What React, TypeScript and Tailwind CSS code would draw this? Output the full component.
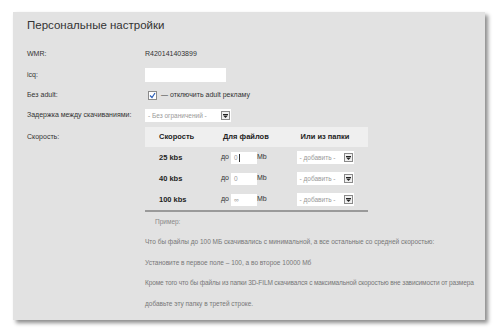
import React from 'react';

const font = { fontFamily: '"Liberation Sans", Arial, sans-serif' };

function ArrowBox() {
  return (
    <span className="ml-auto mr-[1px] flex h-[9px] w-[9px] items-center justify-center border border-[#8a8a8a] bg-[#f0f0f0]">
      <svg width="5" height="4" viewBox="0 0 5 4">
        <rect x="0" y="0" width="5" height="1" fill="#222" />
        <path d="M0 1.5 H5 L2.5 4 Z" fill="#222" />
      </svg>
    </span>
  );
}

function Select({ text, width }: { text: string; width: string }) {
  return (
    <div className={`flex h-[13px] items-center whitespace-nowrap bg-white pl-[3px] text-[6.5px] text-[#999] ${width}`}>
      <span>{text}</span>
      <ArrowBox />
    </div>
  );
}

function SpeedRow({ speed, value, cursor }: { speed: string; value: string; cursor?: boolean }) {
  return (
    <div className="grid h-[21px] grid-cols-[60px_77px_86px] items-center">
      <span className="pl-[14px] text-[7.5px] font-bold text-[#222]">{speed}</span>
      <div className="flex items-center pl-[16px] text-[7px] text-[#333]">
        <span className="mr-[2px]">до</span>
        <span className="flex h-[12px] w-[26px] items-center bg-white pl-[3px] text-[6.5px] text-[#999]">
          {value}
          {cursor && <span className="ml-[1px] h-[8px] w-px bg-[#333]" />}
        </span>
        <span className="text-[7px] text-[#333]">Mb</span>
      </div>
      <div className="flex justify-center">
        <Select text="- добавить -" width="w-[57px]" />
      </div>
    </div>
  );
}

export default function App() {
  return (
    <div className="h-[334px] w-[500px] overflow-hidden bg-white pl-[13px] pt-[12px]" style={font}>
      <div className="h-[308px] w-[472px] overflow-hidden bg-[#e2e2e2] pl-[14px] shadow-[3px_3px_4px_rgba(0,0,0,0.45)]">
        <h1 className="h-[31px] pt-[6px] text-[11.5px] leading-[14px] text-[#333]">Персональные настройки</h1>

        <div className="grid grid-cols-[118px_1fr] whitespace-nowrap text-[7px] text-[#333]">
          <div className="flex h-[22px] items-center">WMR:</div>
          <div className="flex h-[22px] items-center">R420141403899</div>

          <div className="flex h-[20px] items-center">icq:</div>
          <div className="flex h-[20px] items-center">
            <span className="h-[14px] w-[81px] bg-white" />
          </div>

          <div className="flex h-[20px] items-center">Без adult:</div>
          <div className="flex h-[20px] items-center pl-[3px]">
            <span className="mr-[4px] flex h-[9px] w-[9px] items-center justify-center border border-[#8a8a8a] bg-white">
              <svg width="7" height="7" viewBox="0 0 7 7">
                <path d="M1 3.5 L3 5.5 L6 1" stroke="#2c5fb8" strokeWidth="1.2" fill="none" />
              </svg>
            </span>
            <span>— отключить adult рекламу</span>
          </div>

          <div className="flex h-[21px] items-center">Задержка между скачиваниями:</div>
          <div className="flex h-[21px] items-center">
            <Select text="- Без ограничений -" width="w-[86px]" />
          </div>

          <div className="pt-[1px]">
            <div className="flex h-[20px] items-center">Скорость:</div>
          </div>
          <div className="pt-[1px]">
            <div className="w-[223px]">
              <div className="grid h-[20px] grid-cols-[60px_77px_86px] items-center bg-[#efefef] text-[7.5px] font-bold text-[#222]">
                <span className="pl-[14px]">Скорость</span>
                <span className="pl-[18px]">Для файлов</span>
                <span className="text-center">Или из папки</span>
              </div>
              <SpeedRow speed="25 kbs" value="0" cursor />
              <SpeedRow speed="40 kbs" value="0" />
              <SpeedRow speed="100 kbs" value="∞" />
              <div className="h-[2px] bg-[#9a9a9a]" />
            </div>

            <div className="flex h-[20px] items-center pl-[10px] text-[6.5px] text-[#888]">Пример:</div>
            <div className="text-[6.5px] leading-[20.5px] text-[#777]">
              <p>Что бы файлы до 100 МБ скачивались с минимальной, а все остальные со средней скоростью:</p>
              <p>Установите в первое поле – 100, а во второе 10000 Мб</p>
              <p className="tracking-[-0.12px]">Кроме того что бы файлы из папки 3D-FILM скачивался с максимальной скоростью вне зависимости от размера</p>
              <p>добавьте эту папку в третей строке.</p>
            </div>
          </div>
        </div>
      </div>
    </div>
  );
}
